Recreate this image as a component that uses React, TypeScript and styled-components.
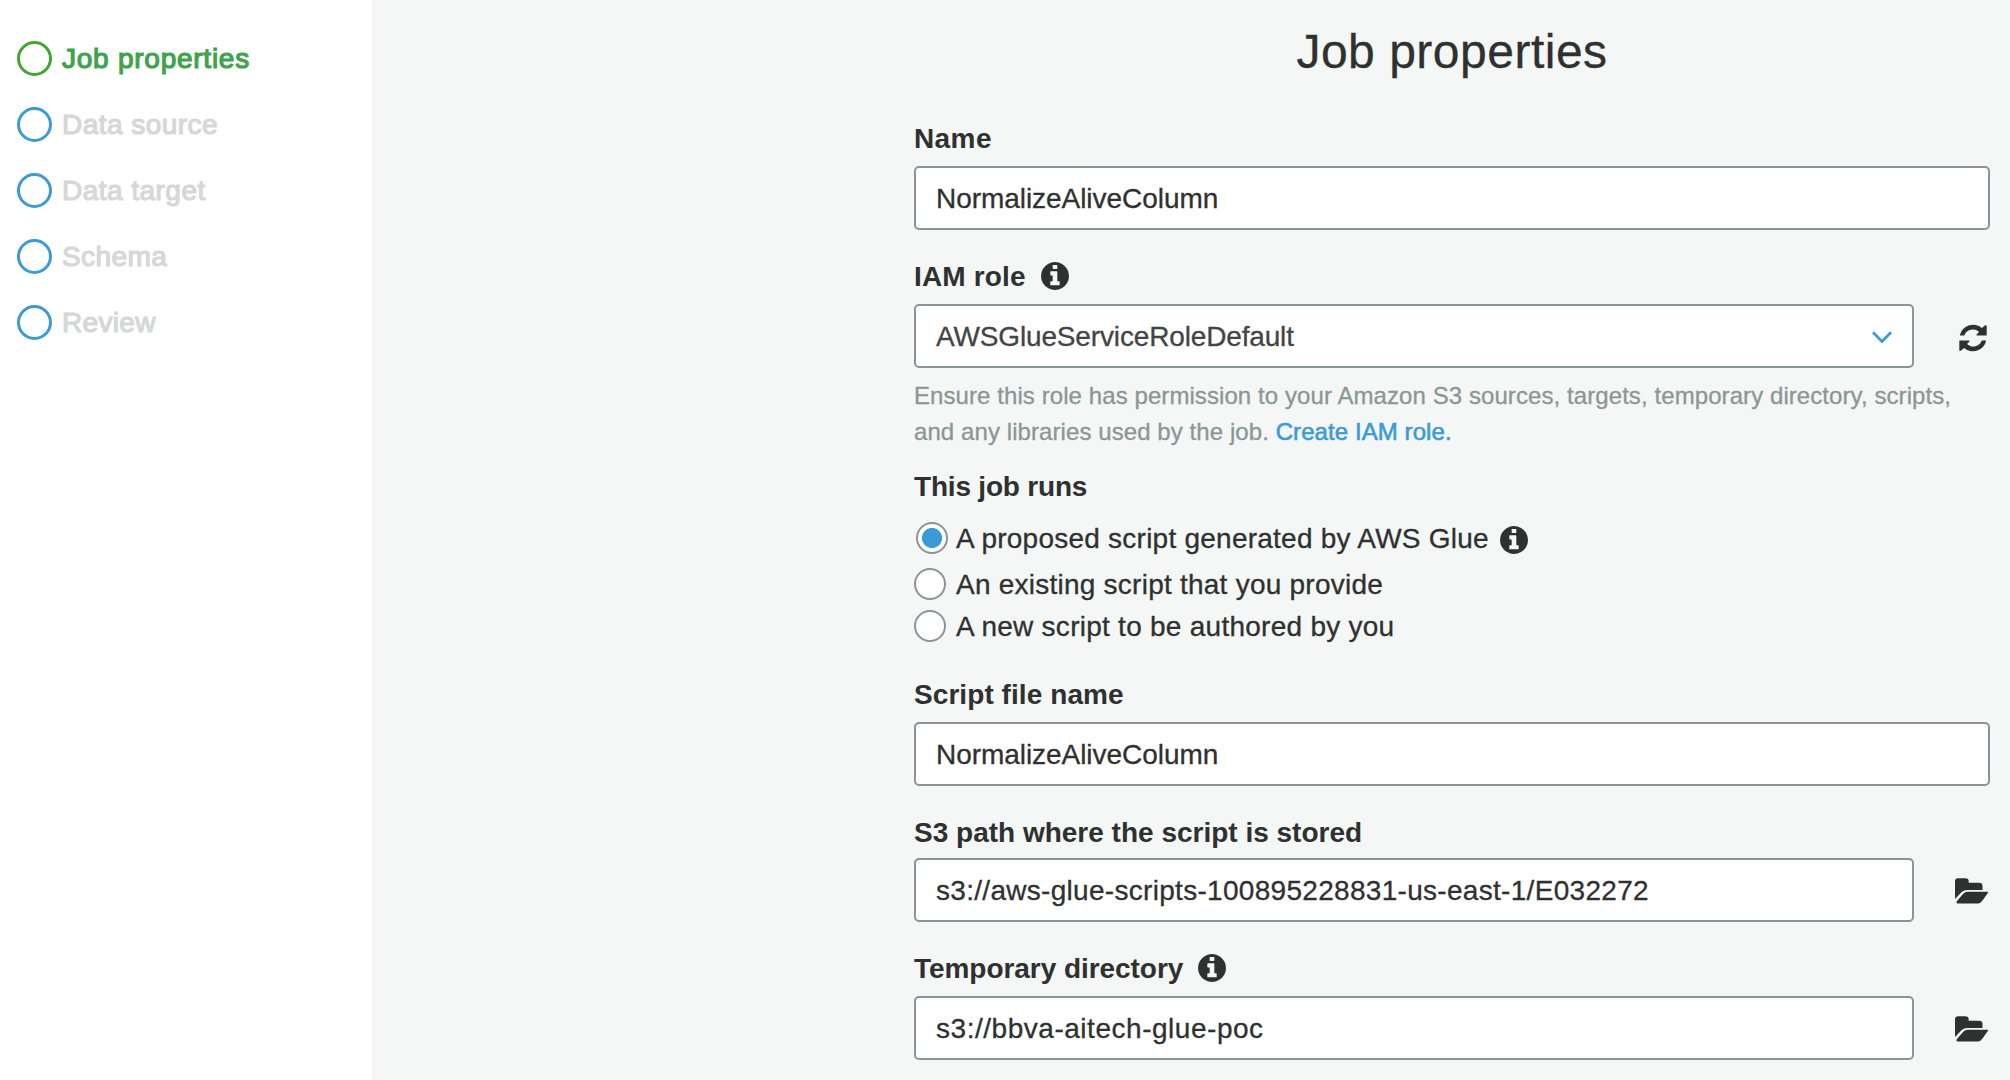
import React from "react";
import styled, { createGlobalStyle } from "styled-components";

const Global = createGlobalStyle`
  * { box-sizing: border-box; }
  body { margin: 0; background: #f4f7f6; font-family: "Liberation Sans", Arial, sans-serif; color: #2f3130; overflow: hidden; }
`;

const Page = styled.div`
  display: flex;
  width: 2010px;
  height: 1080px;
  overflow: hidden;
  background: #f4f7f6;
`;

const Sidebar = styled.nav`
  flex: 0 0 372px;
  background: #fff;
  padding: 25.5px 0 0 17px;
`;

const Text = styled.span<{ $spacing?: number; $drop?: number; $stroke?: number }>`
  padding-top: ${(p) => p.$drop ?? 2}px;
  letter-spacing: ${(p) => p.$spacing ?? 0}px;
  -webkit-text-stroke: ${(p) => p.$stroke ?? 0}px currentColor;
  white-space: nowrap;
`;

const Step = styled.div<{ $active?: boolean }>`
  display: flex;
  align-items: center;
  height: 66px;
  gap: 10px;
  font-size: 28px;
  line-height: 32px;
  color: ${(p) => (p.$active ? "#3fa34d" : "#d5d8d8")};
`;

const Ring = styled.span<{ $active?: boolean }>`
  width: 35px;
  height: 35px;
  border-radius: 50%;
  border: 3px solid ${(p) => (p.$active ? "#44a532" : "#3c9bd6")};
`;

const Main = styled.main`
  margin-left: 542px;
  width: 1076px;
  flex: none;
`;

const Title = styled.h1`
  margin: 0;
  height: 120px;
  padding-top: 24px;
  text-align: center;
  font-weight: 400;
  font-size: 48px;
  line-height: 55px;
  letter-spacing: 0.5px;
  -webkit-text-stroke: 0.3px currentColor;
`;

const Field = styled.section<{ $height: number }>`
  height: ${(p) => p.$height}px;
`;

const Label = styled.div<{ $height?: number }>`
  display: flex;
  align-items: center;
  gap: 15px;
  height: ${(p) => p.$height ?? 46}px;
  padding-bottom: 10px;
  font-size: 28px;
  font-weight: 700;
  line-height: 32px;
`;

const Row = styled.div`
  display: flex;
  align-items: center;
  justify-content: space-between;
`;

const Box = styled.div<{ $short?: boolean; $muted?: boolean }>`
  display: flex;
  align-items: center;
  justify-content: space-between;
  width: ${(p) => (p.$short ? "1000px" : "100%")};
  height: 64px;
  padding: 0 20px;
  background: #fff;
  border: 2px solid #8b9496;
  border-radius: 5px;
  font-size: 28px;
  line-height: 32px;
  color: ${(p) => (p.$muted ? "#444" : "#2f3130")};
`;

const Help = styled.p`
  margin: 10px 0 0;
  font-size: 24px;
  line-height: 36px;
  letter-spacing: 0.08px;
  color: #8b9695;
  white-space: nowrap;
  -webkit-text-stroke: 0.3px currentColor;
`;

const Link = styled.a`
  color: #3c9bd6;
  -webkit-text-stroke: 0.6px currentColor;
`;

const Option = styled.label<{ $height: number }>`
  display: flex;
  align-items: center;
  height: ${(p) => p.$height}px;
  font-size: 28px;
  line-height: 32px;
`;

const Radio = styled.span<{ $on?: boolean }>`
  width: 32px;
  height: 32px;
  margin: ${(p) => (p.$on ? "0 8px 0 2px" : "0 10px 0 0")};
  border-radius: 50%;
  border: 2px solid #8b9496;
  background: ${(p) => (p.$on ? "radial-gradient(circle, #3c9bd6 0 9.7px, #fff 10.3px)" : "#fff")};
`;

const Svg = styled.svg`
  display: block;
  flex: none;
`;

const InfoSlot = styled.span`
  padding: 4px 0 0 11px;
`;

const IconSlot = styled.div<{ $left: number; $top: number }>`
  display: flex;
  justify-content: center;
  width: 38px;
  padding: ${(p) => p.$top}px 0 0 ${(p) => p.$left}px;
`;

const ChevronSlot = styled.span`
  padding-top: 2px;
`;

const Info = () => (
  <Svg width="28" height="28" viewBox="0 0 1536 1536" fill="#2f3130">
    <path d="M1024 1248v-160q0-14-9-23t-23-9h-96V544q0-14-9-23t-23-9H544q-14 0-23 9t-9 23v160q0 14 9 23t23 9h96v320h-96q-14 0-23 9t-9 23v160q0 14 9 23t23 9h448q14 0 23-9t9-23zM896 352V192q0-14-9-23t-23-9H672q-14 0-23 9t-9 23v160q0 14 9 23t23 9h192q14 0 23-9t9-23zm640 416q0 209-103 385.5T1153.500 1433 768 1536t-385.500-103T103 1153.500 0 768t103-385.500T382.500 103 768 0t385.500 103T1433 382.500 1536 768z" />
  </Svg>
);

const ARROW = "M.8 11.6A13.500 13.500 0 0 1 22.900 4L25.800 1.500Q27.700.6 27.700 2V11.600H18Q17 11.600 17.600 10.600L20 8A8.900 8.900 0 0 0 5.300 11.600Z";

const Refresh = () => (
  <Svg width="28" height="28" viewBox="0 0 28 28" fill="#2f3130">
    <path d={ARROW} />
    <path d={ARROW} transform="rotate(180 14 14)" />
  </Svg>
);

const Folder = () => (
  <Svg width="34" height="26" viewBox="0 0 34 26" fill="#2f3130">
    <path d="M0 21V3.500Q0 .3 3 .3H10.500Q13.700.3 13.700 3.500V4.800H24Q27.500 4.800 27.500 8V11.900H12.500Q9 11.900 6.800 14Z" />
    <path d="M1.600 23.600 8 16Q10 13.800 12.500 13.800H32.500Q33.500 13.800 33 14.700L27.500 22.500Q25.500 25.400 23 25.400H2.500Q.8 25.400 1.600 23.600Z" />
  </Svg>
);

const steps = [
  { name: "Job properties", spacing: 0.75, active: true },
  { name: "Data source", spacing: 0.47 },
  { name: "Data target", spacing: 0.47 },
  { name: "Schema", spacing: 0.43 },
  { name: "Review", spacing: 0.33 },
];

export default function App() {
  return (
    <Page>
      <Global />
      <Sidebar>
        {steps.map((s) => (
          <Step key={s.name} $active={s.active}>
            <Ring $active={s.active} />
            <Text $spacing={s.spacing} $drop={1} $stroke={1.2}>{s.name}</Text>
          </Step>
        ))}
      </Sidebar>
      <Main>
        <Title>Job properties</Title>
        <Field $height={138}>
          <Label><Text $spacing={0.4}>Name</Text></Label>
          <Box><Text $spacing={-0.05} $stroke={0.3}>NormalizeAliveColumn</Text></Box>
        </Field>
        <Field $height={204}>
          <Label><Text $spacing={0.15}>IAM role</Text><Info /></Label>
          <Row>
            <Box $short $muted>
              <Text $spacing={-0.15} $stroke={0.3}>AWSGlueServiceRoleDefault</Text>
              <ChevronSlot>
                <Svg width="20" height="13" viewBox="0 0 20 13" fill="none" stroke="#3c9bd6" strokeWidth="2.7">
                  <path d="M1 1.200 10 10.500 19 1.200" />
                </Svg>
              </ChevronSlot>
            </Box>
            <IconSlot $left={3} $top={4}><Refresh /></IconSlot>
          </Row>
          <Help>
            Ensure this role has permission to your Amazon S3 sources, targets, temporary directory, scripts,
            <br />
            and any libraries used by the job. <Link>Create IAM role.</Link>
          </Help>
        </Field>
        <Field $height={214}>
          <Label $height={54}><Text $spacing={-0.2} $drop={6}>This job runs</Text></Label>
          <Option $height={44}>
            <Radio $on />
            <Text $spacing={0.24} $stroke={0.3}>A proposed script generated by AWS Glue</Text>
            <InfoSlot><Info /></InfoSlot>
          </Option>
          <Option $height={48}><Radio /><Text $spacing={0.24} $stroke={0.3}>An existing script that you provide</Text></Option>
          <Option $height={36}><Radio /><Text $spacing={0.26} $stroke={0.3}>A new script to be authored by you</Text></Option>
        </Field>
        <Field $height={136}>
          <Label><Text $spacing={0.07}>Script file name</Text></Label>
          <Box><Text $spacing={-0.05} $stroke={0.3}>NormalizeAliveColumn</Text></Box>
        </Field>
        <Field $height={138}>
          <Label><Text $drop={6}>S3 path where the script is stored</Text></Label>
          <Row>
            <Box $short><Text $spacing={0.3} $stroke={0.3}>s3://aws-glue-scripts-100895228831-us-east-1/E032272</Text></Box>
            <IconSlot $left={2} $top={2}><Folder /></IconSlot>
          </Row>
        </Field>
        <Field $height={130}>
          <Label><Text $spacing={-0.05}>Temporary directory</Text><Info /></Label>
          <Row>
            <Box $short><Text $spacing={0.53} $stroke={0.3}>s3://bbva-aitech-glue-poc</Text></Box>
            <IconSlot $left={2} $top={2}><Folder /></IconSlot>
          </Row>
        </Field>
      </Main>
    </Page>
  );
}
